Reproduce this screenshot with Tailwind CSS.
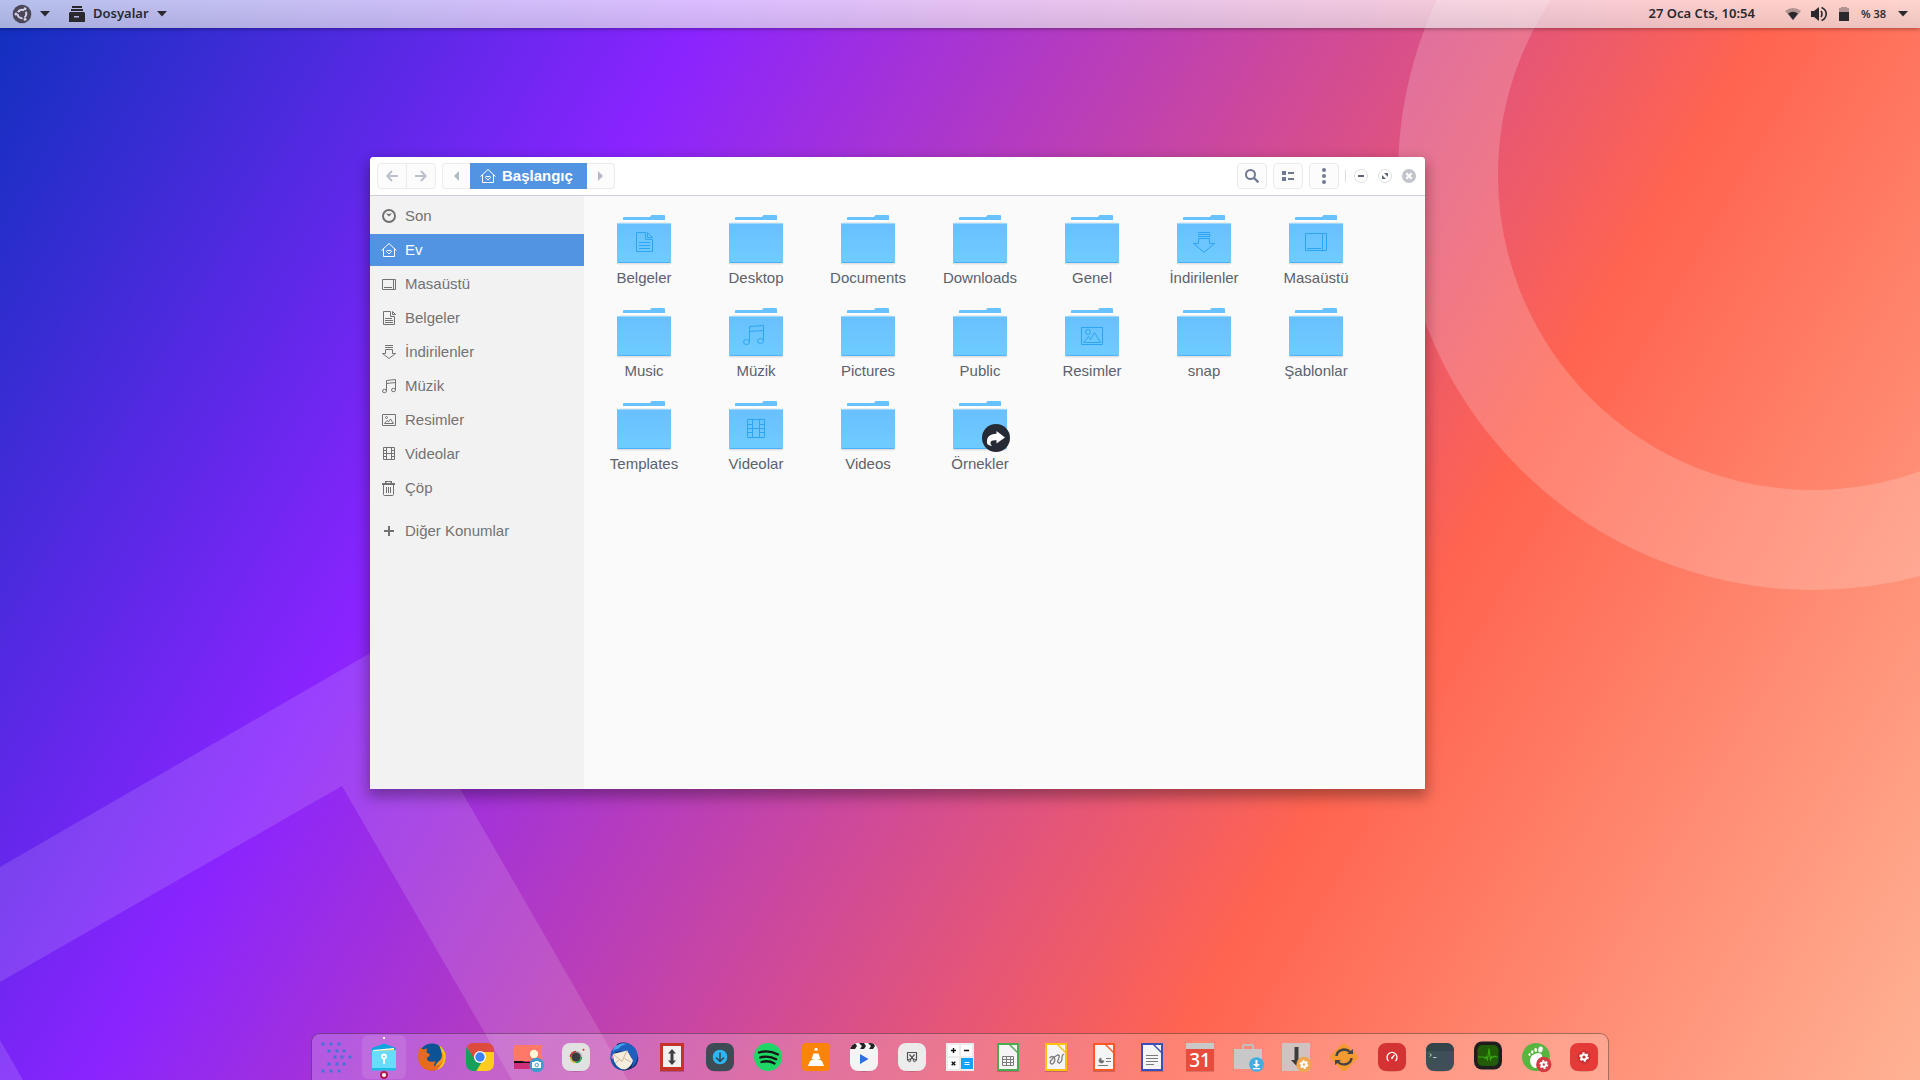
<!DOCTYPE html>
<html lang="tr">
<head>
  <meta charset="UTF-8" />
  <meta name="viewport" content="width=device-width, initial-scale=1" />
  <title>Başlangıç - Dosyalar</title>
  <script src="https://cdn.jsdelivr.net/npm/@tailwindcss/browser@4"></script>
</head>
<body class="relative h-screen overflow-hidden flex flex-col bg-[linear-gradient(120deg,#1030be_0%,#8a24ff_28%,#ff6450_70%,#ffb294_100%)] font-['Liberation_Sans',sans-serif]">

  <!-- wallpaper shapes -->
  <svg class="absolute inset-0 w-full h-full -z-0" viewBox="0 0 1920 1080" preserveAspectRatio="xMidYMid slice" aria-hidden="true">
    <circle cx="1813" cy="175" r="365" fill="none" stroke="#fff" stroke-opacity=".19" stroke-width="100" />
    <path d="M0 867L379 648L628 1080H512L342 786L0 982zM0 1040L23 1080H0z" fill="#fff" fill-opacity=".13" />
  </svg>

  <!-- top panel -->
  <header class="relative h-7 shrink-0 flex items-center justify-between px-3 bg-linear-to-b from-white/70 to-[#e6e6e9]/70 shadow-[0_1px_4px_rgba(0,0,0,0.35)] text-[#2a2a2e] text-[13px] font-semibold font-['Noto_Sans',sans-serif]">
    <div class="flex items-center">
      <button type="button" class="flex items-center gap-2" aria-label="Uygulamalar">
        <svg class="size-5" viewBox="0 0 20 20">
          <circle cx="10" cy="10" r="9.300" fill="#4b4658" />
          <circle cx="10" cy="10" r="4.300" fill="none" stroke="#d4d0e8" stroke-width="2" stroke-dasharray="7 2" stroke-dashoffset="3" />
          <circle cx="4" cy="10" r="1.500" fill="#d4d0e8" /><circle cx="13" cy="4.800" r="1.500" fill="#d4d0e8" /><circle cx="13" cy="15.200" r="1.500" fill="#d4d0e8" />
        </svg>
        <svg class="w-[10px] h-[6px]" viewBox="0 0 10 6"><path d="M0 0h10L5 5.500z" fill="#2a2a2e" /></svg>
      </button>
      <button type="button" class="ml-[19px] flex items-center gap-2">
        <svg class="size-4" viewBox="0 0 16 16" fill="#2a2a2e"><path d="M3 0h10v2H3zM2 3h12v2H2zM1 6h14l1 1v9H0V7zM5 10v1.500h5V10z" fill-rule="evenodd" /></svg>
        <span>Dosyalar</span>
        <svg class="w-[10px] h-[6px]" viewBox="0 0 10 6"><path d="M0 0h10L5 5.500z" fill="#2a2a2e" /></svg>
      </button>
    </div>
    <div class="flex items-center">
      <button type="button">27 Oca Cts, 10:54</button>
      <button type="button" class="ml-[30px] flex items-center" aria-label="Sistem menüsü">
        <svg class="w-4 h-4" viewBox="0 0 16 16"><path d="M0 5Q8-1 16 5L8 14z" fill="#2a2a2e" fill-opacity=".35" /><path d="M3 7.500Q8 4 13 7.500L8 14z" fill="#2a2a2e" /></svg>
        <svg class="ml-2.5 w-4 h-4" viewBox="0 0 16 16"><path d="M0 5h3l5-4v14l-5-4H0z" fill="#2a2a2e" /><path d="M10 5q2 3 0 6M10.500 1.500Q17 4.500 14.500 11Q13.500 13.500 10.500 14.500" fill="none" stroke="#2a2a2e" stroke-width="1.600" /></svg>
        <svg class="ml-3 w-[10px] h-[14px]" viewBox="0 0 10 14"><path d="M2 0h6v1h2v4H0V1h2z" fill="#2a2a2e" fill-opacity=".35" /><path d="M0 5h10v9H0z" fill="#2a2a2e" /></svg>
        <span class="ml-3 text-[11px]">% 38</span>
        <svg class="ml-3 w-[10px] h-[6px]" viewBox="0 0 10 6"><path d="M0 0h10L5 5.500z" fill="#2a2a2e" /></svg>
      </button>
    </div>
  </header>

  <!-- file manager -->
  <main class="relative flex-1 min-h-0 flex pl-[370px] pr-[495px] pt-[129px] pb-[291px]">
    <section class="flex-1 flex flex-col rounded-t-[4px] overflow-hidden bg-[#fafafa] shadow-[0_6px_14px_2px_rgba(0,0,0,0.32)]">
      <div class="h-[39px] shrink-0 flex items-center justify-between pl-[7px] pr-[9px] bg-white border-b border-[#cfd1da]">
        <div class="flex items-center gap-1.5">
          <div class="flex h-[26px] rounded-[4px] border border-[#ebebed] bg-[#fcfcfc] text-[#bcc0cc]">
            <button type="button" aria-label="Geri" class="w-[29px] flex items-center justify-center border-r border-[#ebebed]">
              <svg class="w-3 h-3" viewBox="0 0 12 12" fill="none" stroke="currentColor" stroke-width="2"><path d="M12 6H1.500M6 1L1.300 6L6 11" /></svg>
            </button>
            <button type="button" aria-label="İleri" class="w-[28px] flex items-center justify-center">
              <svg class="w-3 h-3" viewBox="0 0 12 12" fill="none" stroke="currentColor" stroke-width="2"><path d="M0 6H10.500M6 1L10.700 6L6 11" /></svg>
            </button>
          </div>
          <div class="flex h-[26px] rounded-[4px] bg-[#fcfcfc] text-[#b4b9c6]">
            <button type="button" aria-label="Önceki" class="w-7 flex items-center justify-center rounded-l-[4px] border border-r-0 border-[#ebebed]">
              <svg class="w-[5px] h-[10px]" viewBox="0 0 5 10"><path d="M5 0v10L0 5z" fill="currentColor" /></svg>
            </button>
            <button type="button" class="w-[117px] flex items-center gap-1.5 pl-2.5 bg-[#5294e2] text-white text-[15px] font-bold">
              <svg class="size-4" viewBox="0 0 16 16" fill="none" stroke="currentColor"><path d="M.500 8.500L8 1.500l7.500 7M2.500 7v7.500h11V7" /><path d="M8 12L5.500 9.500q0-2 2.500-.8q2.500-1.200 2.500.8z" /></svg>
              Başlangıç
            </button>
            <button type="button" aria-label="Sonraki" class="w-7 flex items-center justify-center rounded-r-[4px] border border-l-0 border-[#ebebed]">
              <svg class="w-[5px] h-[10px]" viewBox="0 0 5 10"><path d="M0 0v10l5-5z" fill="currentColor" /></svg>
            </button>
          </div>
        </div>
        <div class="flex items-center text-[#6f7a92]">
          <div class="flex gap-1.5">
            <button type="button" aria-label="Ara" class="w-[30px] h-[26px] flex items-center justify-center rounded-[4px] border border-[#ebebed] bg-[#fcfcfc]">
              <svg class="size-[14px]" viewBox="0 0 14 14" fill="none" stroke="currentColor" stroke-width="2"><circle cx="5.500" cy="5.500" r="4.500" /><path d="M8.800 8.800L13.300 13.300" stroke-width="2.300" /></svg>
            </button>
            <button type="button" aria-label="Liste görünümü" class="w-[30px] h-[26px] flex items-center justify-center rounded-[4px] border border-[#ebebed] bg-[#fcfcfc]">
              <svg class="w-3 h-[10px]" viewBox="0 0 12 10" fill="currentColor"><path d="M0 0h4v4H0zM0 6h4v4H0zM6 1h6v2H6zM6 7h6v2H6z" /></svg>
            </button>
            <button type="button" aria-label="Menü" class="w-[30px] h-[26px] flex items-center justify-center rounded-[4px] border border-[#ebebed] bg-[#fcfcfc]">
              <svg class="w-1 h-4" viewBox="0 0 4 16" fill="currentColor"><circle cx="2" cy="2" r="2" /><circle cx="2" cy="8" r="2" /><circle cx="2" cy="14" r="2" /></svg>
            </button>
          </div>
          <div class="ml-1.5 mr-2 w-px h-3 bg-[#dddee2]"></div>
          <div class="flex gap-2.5">
            <button type="button" aria-label="Küçült" class="size-[14px] flex"><svg class="size-[14px]" viewBox="0 0 14 14"><circle cx="7" cy="7" r="6.500" fill="#fff" stroke="#dcdde0" /><path d="M4 6h6v2H4z" fill="#5c6478" /></svg></button>
            <button type="button" aria-label="Büyüt" class="size-[14px] flex"><svg class="size-[14px]" viewBox="0 0 14 14"><circle cx="7" cy="7" r="6.500" fill="#fff" stroke="#dcdde0" /><path d="M6 4h4v4zM4 6v4h4z" fill="#5c6478" /></svg></button>
            <button type="button" aria-label="Kapat" class="size-[14px] flex"><svg class="size-[14px]" viewBox="0 0 14 14"><circle cx="7" cy="7" r="7" fill="#c2c4cb" /><path d="M4.300 4.300l5.400 5.400M9.700 4.300l-5.400 5.400" stroke="#fff" stroke-width="2.200" /></svg></button>
          </div>
        </div>
      </div>

      <div class="flex-1 min-h-0 flex">
        <nav id="places" class="w-[214px] shrink-0 flex flex-col gap-0.5 pt-1 bg-[#f2f2f2] text-[15px] text-[#727272]"></nav>
        <div id="files" class="flex-1 grid grid-cols-[repeat(auto-fill,112px)] content-start gap-y-[19px] pt-[18px] pl-1 text-[15px] leading-5 text-[#5c616c]"></div>
      </div>
    </section>
  </main>

  <!-- dock -->
  <footer class="absolute bottom-0 inset-x-0 flex justify-center">
    <nav id="dock" class="flex h-[47px] rounded-t-[9px] border border-b-0 border-black/35 bg-white/20"></nav>
  </footer>

  <script>
    const placeIcons = {
      recent: '<circle cx="8" cy="8" r="6" stroke-width="2"/><path d="M5 5.500h1L8 6l2-.5h1L8 8.500z" fill="currentColor" stroke="none"/>',
      home: '<path d="M.500 8.500L8 1.500l7.500 7M2.500 7v7.500h11V7"/><path d="M8 12L5.500 9.500q0-2 2.500-.8q2.500-1.200 2.500.8z"/>',
      desktop: '<path d="M1.500 3.500h13v10h-13zM12.500 3.500v10M3 11.500h8"/>',
      docs: '<path d="M9.500 1.500h-7v13h11v-8h-4zM11.500 1.500v3h3zM4 8.500h7M4 10.500h8M4 12.500h8"/>',
      down: '<path d="M4 1.500h8M4 3.500h8M4.500 9.500V5.500h7v4h3L8 14.500L1.500 9.500z"/>',
      music: '<path d="M5.500 12.500v-10l9-1v10M5.500 5.500l9-1"/><ellipse cx="3.500" cy="13" rx="2" ry="1.700"/><ellipse cx="12.500" cy="12" rx="2" ry="1.700"/>',
      pics: '<path d="M1.500 2.500h13v11h-13zM3.500 11.500h9L9.500 7L7.500 9.800L6 8.500z"/><circle cx="5.500" cy="5.500" r="1"/>',
      video: '<path d="M2.500 1.500h11v12h-11zM5.500 1.500v12M10.500 1.500v12M2.500 4.500h3M2.500 7.500h11M2.500 10.500h3M10.500 4.500h3M10.500 10.500h3"/>',
      trash: '<path d="M2.500 5v9.500q0 1 1 1h8q1 0 1-1V5M5.500 7v6M7.500 7v6M9.500 7v6"/><path d="M1 5V3h3V1h7v2h3v2zM5.500 2v1h4V2z" fill="currentColor" stroke="none" fill-rule="evenodd"/>',
      plus: '<path d="M8 3v10M3 8h10" stroke-width="2"/>'
    };

    const places = [
      ['recent', 'Son'], ['home', 'Ev'], ['desktop', 'Masaüstü'], ['docs', 'Belgeler'], ['down', 'İndirilenler'],
      ['music', 'Müzik'], ['pics', 'Resimler'], ['video', 'Videolar'], ['trash', 'Çöp'], ['plus', 'Diğer Konumlar']
    ];

    document.getElementById('places').innerHTML = places.map(([icon, name]) => {
      const extra = name === 'Ev' ? 'bg-[#5294e2] text-white' : name === 'Diğer Konumlar' ? 'mt-[9px]' : '';
      return `<a href="#" class="h-8 flex items-center gap-2 pl-[11px] ${extra}">
        <svg class="size-4" viewBox="0 0 16 16" fill="none" stroke="currentColor">${placeIcons[icon]}</svg>${name}</a>`;
    }).join('');

    const emblems = {
      docs: '<path d="M29.500 18.500h-9v19h16v-12h-7zM31.500 18.500v5h5zM23 28.500h11M23 31.500h11M23 34.500h11"/>',
      down: '<path d="M22 18.500h12M22 20.500h12v2H22M22.500 29.500v-5h11v5h5L28 38.300L17.500 29.500z"/>',
      desktop: '<path d="M17.500 19.500h21v17h-21zM34.500 19.500v17M19 34.500h14"/>',
      music: '<path d="M21.500 34.500v-15l14-1v15M21.500 24.500l14-1"/><ellipse cx="18.500" cy="35" rx="3" ry="2.500"/><ellipse cx="32.500" cy="34" rx="3" ry="2.500"/>',
      pics: '<path d="M17.500 20.500h21v17h-21zM19.500 35.500h17L30.500 25.500L26.500 32.500L24.500 29.500z"/><circle cx="24" cy="25" r="2.500"/>',
      video: '<path d="M19.500 19.500h17v18h-17zM24.500 19.500v18M31.500 19.500v18M19.500 24.500h5M19.500 28.500h17M19.500 32.500h5M31.500 24.500h5M31.500 32.500h5"/>'
    };

    const linkBadge = '<circle cx="44" cy="38" r="14" fill="#252a35"/><path d="M35 43q-1-9 9.500-9.300V31l8.500 6.500l-8.500 6v-3.200q-5.500-.5-6 2.200q-.5 1.500 1.500 3.500q-5-1-5-3z" fill="#fff"/>';

    const files = [
      ['Belgeler', 'docs'], ['Desktop'], ['Documents'], ['Downloads'], ['Genel'], ['İndirilenler', 'down'], ['Masaüstü', 'desktop'],
      ['Music'], ['Müzik', 'music'], ['Pictures'], ['Public'], ['Resimler', 'pics'], ['snap'], ['Şablonlar'],
      ['Templates'], ['Videolar', 'video'], ['Videos'], ['Örnekler', 'link']
    ];

    document.getElementById('files').innerHTML = files.map(([name, emblem]) => `
      <a href="#" class="flex flex-col items-center gap-0.5">
        <svg class="w-14 h-[52px] overflow-visible" viewBox="0 0 56 52">
          <rect x="1" y="47" width="54" height="3.500" rx="1.500" fill="#000" fill-opacity=".1"/>
          <path d="M7 7V4q0-1 1-1h26q1-2 2-2h12q1 0 1 1v5z" fill="#68c2ff"/>
          <path d="M4 10V7q0-1 1-1h46q1 0 1 1v3z" fill="#fff"/>
          <path d="M4 8.500h48" stroke="#ececec"/>
          <path d="M1 10q0-1 1-1h52q1 0 1 1v38q0 1-1 1H2q-1 0-1-1z" fill="url(#front)"/>
          <path d="M2 9.500h52" stroke="#9fd8ff"/><path d="M2 48.500h52" stroke="#4cb1f6"/>
          ${emblems[emblem] ? `<g fill="none" stroke="#2ea4f4">${emblems[emblem]}</g>` : ''}
          ${emblem === 'link' ? linkBadge : ''}
        </svg>
        <span>${name}</span>
      </a>`).join('');

    const tile = (fill) => `<path d="M24 9c11 0 14 3 14 14s-3 14-14 14s-14-3-14-14s3-14 14-14z" fill="#000" fill-opacity=".15" transform="translate(0 1)"/><rect x="10" y="9" width="28" height="28" rx="8" fill="${fill}"/>`;
    const page = (color, inner) => `<path d="M13 10h22v28H13z" fill="#000" fill-opacity=".2"/><path d="M13 9h22v28H13z" fill="${color}"/><path d="M15 11h10l8 8v16H15z" fill="#f5f5f5"/><path d="M27 11h6v6z" fill="#f5f5f5"/><g fill="none" stroke="#7a7a7a">${inner}</g>`;
    const gear = (x, y, r) => `<g transform="translate(${x} ${y})"><circle r="${r}" fill="none" stroke="#fff" stroke-width="2"/><circle r="${r + 1.400}" fill="none" stroke="#fff" stroke-width="1.600" stroke-dasharray="${(r + 1.400) * 0.5236} ${(r + 1.400) * 0.5236}"/></g>`;
    const dots = [[10, 11, 19, 27], [17, 17, 25, 32], [23, 23, 30, 38], [30, 17, 25, 32], [37, 11, 19, 27]]
      .map(([y, ...xs]) => xs.map((x) => `<rect x="${x - 1.500}" y="${y - 1.500}" width="3" height="3" fill="#4274d8"/>`).join('')).join('');

    const dock = [
      ['Uygulamaları Göster', dots],
      ['Dosyalar', `<rect x="2" y="1" width="44" height="44" rx="6" fill="#fff" fill-opacity=".1"/><rect x="23" y="3" width="2" height="2" fill="#fff"/>
        <path d="M12 14L24 9.500L36 14v5H12z" fill="#10a4e0"/><path d="M13 16l21-2v4H13z" fill="#fff"/><path d="M14 17l20-2v3H14z" fill="#ffd84c"/>
        <path d="M12 17l24-1v20H12z" fill="#68dcfd"/><path d="M12 34h24v2.500H12z" fill="#1cbde6"/><circle cx="24" cy="22.500" r="2" fill="none" stroke="#fff" stroke-width="1.800"/><path d="M24 24.500v5.500" stroke="#fff" stroke-width="1.800"/>
        <circle cx="24" cy="41" r="4" fill="#b01c4e"/><circle cx="24" cy="41" r="2" fill="#fff"/>`],
      ['Firefox', `<circle cx="24" cy="23" r="13.500" fill="#0b5394"/><path d="M31 11q7 4.500 6.800 12.500Q37 35 26 36.500q9-5 8-14q0-5-3-11.500z" fill="#fcc419"/><path d="M34 17q4 9-2 15l-4 4q-2-5 2-8q5-3 4-11z" fill="#f7931e"/>
        <path d="M12 13q1 2 4 2.500q2-1 3-1l-.5 4l3 1.500q1 2-2.500 3.500q-.5 3 2.500 4q4 .5 6-.5q-2 4-2 9.300Q12 37 10.200 25Q10 17 12 13z" fill="#e66a1f"/><path d="M11 22q4 11 16 10q5-1 7-4q-3 9-10.500 8.800Q13 36 11 22z" fill="#e66a1f"/>`],
      ['Chrome', `<clipPath id="cr"><rect x="10" y="9" width="28" height="28" rx="7"/></clipPath><g clip-path="url(#cr)"><path d="M8 7h32v12H24L18 26z" fill="#dd4b3c"/><path d="M8 9l11 17l7 2l-5 11H8z" fill="#16a05d"/><path d="M24 18h16v21H19l8-13z" fill="#fccd1c"/></g><circle cx="24" cy="23" r="6" fill="#fff"/><circle cx="24" cy="23" r="4.700" fill="#3b82f6"/>`],
      ['Ekran Kaydı', `<path d="M10 11h28v16H10z" fill="#ff7868"/><circle cx="30" cy="20" r="4.200" fill="#fff4d6"/><path d="M10 27h28v8H10z" fill="#cf2e78"/><path d="M10 27h8l3 1h17v1H10z" fill="#111"/><circle cx="32.700" cy="31" r="7.300" fill="#419bcd"/><path d="M28 28h2.500l1-1h2.500l1 1h2v6h-9z" fill="#fff"/><circle cx="32.700" cy="31" r="1.700" fill="none" stroke="#419bcd"/>`],
      ['Kamera', tile('#e2e1e1') + `<circle cx="24" cy="23" r="6" fill="#a3a3a3"/><path d="M18.500 23A5.500 5.500 0 0 1 24 17.500" stroke="#c33" stroke-width="1.500" fill="none"/><path d="M29.500 23A5.500 5.500 0 0 1 24 28.500" stroke="#2a5" stroke-width="1.500" fill="none"/><path d="M18.500 23A5.500 5.500 0 0 0 24 28.500" stroke="#cb3" stroke-width="1.500" fill="none"/><circle cx="24" cy="23" r="4.500" fill="#3b3b3f"/><circle cx="31.500" cy="15.700" r="1" fill="#e0302a"/>`],
      ['Thunderbird', `<path d="M17 10q9-4 16 3q6 7 5 14q-2 8-13 9.500q-9 0-13-7z" fill="#14295f"/><path d="M10.500 24q-1-8 6-12q5-5 12-2.500q8 3 9 11q1 8-6 13q3-8-2-13q-5-4-11-3q-5 1-8 6.500z" fill="#1f5fc0"/><path d="M15 13q5-5 12-3q-6 1-9 5q-4 0-5 3q0-3 2-5z" fill="#49a6ea"/>
        <path d="M13 20l14-3.500l6 10q-2 7-8 9q-8 0-11-6z" fill="#f4ecdc"/><path d="M13 20l9 7.500l5-11M14.500 30l5-4.500M31 28l-6.500-3.500" stroke="#c4b190" stroke-width=".9" fill="none"/><path d="M10.200 22q0 8 6 12q4 3 9 2.500q-8-2-11-9z" fill="#1b51a8"/>`],
      ['Düzenleyici', `<path d="M12 10h24v28H12z" fill="#000" fill-opacity=".2"/><path d="M12 9h24v28H12z" fill="#c63329"/><path d="M15 12h18v21H15z" fill="#f1f1f1"/><path d="M24 15l4 4.500h-2.500v7H28L24 31l-4-4.500h2.500v-7H20z" fill="#3f3f3f"/>`],
      ['uGet', tile('#3d4c54') + `<circle cx="24" cy="23" r="7.300" fill="#2cb6f3"/><path d="M24 18.500v8.500M20 23.500l4 4l4-4" fill="none" stroke="#33454f" stroke-width="1.500"/>`],
      ['Spotify', `<circle cx="24" cy="23" r="14" fill="#1fd565"/><path d="M15 18.500q9.500-3 19 2M16.200 23.500q8.500-2.500 16 1.800M17.500 28q7-2 13 1.500" fill="none" stroke="#151515" stroke-width="2.300" stroke-linecap="round"/>`],
      ['VLC', `<rect x="10" y="9" width="28" height="28" rx="4" fill="#f98408"/><path d="M18 27h12l2 5H16z" fill="#fff"/><path d="M21.500 19.500h5l2 5.500q-4.500 2-9 0zM23 14h2.200l.8 2.500h-4z" fill="#fff"/><path d="M19 26l-.5 2q5.500 2.500 11 0L29 26z" fill="#fff"/>`],
      ['Videolar', tile('#f4f4f5') + `<clipPath id="cl"><rect x="10" y="9" width="28" height="28" rx="8"/></clipPath><path clip-path="url(#cl)" d="M10 9h5l2 3l-2 3h-5zM19 9h5l2 3l-2 3h-4l2-3zM28 9h5l2 3l-2 3h-4l2-3z" fill="#222"/><path d="M20 20l8.500 5l-8.500 5z" fill="#2f6fe0"/>`],
      ['Ekran Görüntüsü', tile('#ececec') + `<path d="M21.500 26H19.500v-7.500h9V26h-2" fill="none" stroke="#555" stroke-width="1.200"/><path d="M21.500 20.500l4.500 5.500M26.500 20.500L22 26" stroke="#555" stroke-width="1.200"/><circle cx="21.500" cy="26.500" r="1.200" fill="none" stroke="#555"/><circle cx="26.500" cy="26.500" r="1.200" fill="none" stroke="#555"/>`],
      ['Hesap Makinesi', `<path d="M10 9h28v28H10z" fill="#ececec"/><path d="M12 11h11v11H12zM25 11h11v11H25zM12 24h11v11H12z" fill="#fff"/><path d="M25 24h12v11H25z" fill="#12a4fa"/><path d="M15 16.500h5M17.500 14v5M28 16.500h5M15.700 27.700l3.600 3.600M19.300 27.700l-3.600 3.600" stroke="#111" stroke-width="1.400"/><path d="M28.500 28.500h5M28.500 30.500h5" stroke="#fff"/>`],
      ['Calc', page('#4bab50', '<path d="M18.500 22.500h11v9h-11zM22.500 22.500v9M26.500 22.500v9M18.500 25.500h11M18.500 28.500h11"/>')],
      ['Draw', page('#fdc010', '<path d="M17.500 24q3-3 5 0q1 4-2 6q-3 0-2-3q3-4 7-6q3 0 1 4q-2 4 1 4q3-2 2.500-6q0-2 2-3" stroke-width="1.300"/>')],
      ['Impress', page('#fb5626', '<path d="M26 24.500h5M26 27.500h5M18 31.500h10"/><path d="M21 24a2.500 2.500 0 1 0 3 3l-3-.3z" fill="#666"/>')],
      ['Writer', page('#3b4fb6', '<path d="M18 21.500h12M18 24.500h12M18 27.500h12M18 30.500h8"/>')],
      ['Takvim', `<path d="M10 15h28v23H10z" fill="#000" fill-opacity=".15"/><path d="M10 15h28v22H10z" fill="#e84c3d"/><path d="M10 9h28v6H10z" fill="#c9c9c9"/><text x="24" y="33" text-anchor="middle" font-family="Noto Sans" font-size="19" font-weight="500" fill="#fff">31</text>`],
      ['Yazılım', `<path d="M19 15v-3q0-1 1-1h8q1 0 1 1v3" fill="none" stroke="#bfbfbf" stroke-width="2"/><path d="M10 15h28v20H10z" fill="#c8c8c8"/><circle cx="32.500" cy="30.500" r="7.300" fill="#43ade3"/><path d="M31.500 26h2v4h2.500l-3.500 3.500L29 30h2.500zM29 34h7v1.200h-7z" fill="#fff"/>`],
      ['Paketler', `<path d="M10 9h28v28H10z" fill="#cfc2c0"/><path d="M22.500 13h4v13h2L24.500 32L19 26h3.500z" fill="#3c3c3c"/><circle cx="32" cy="30.500" r="7.700" fill="#f0a650"/>` + gear(32, 30.500, 2.200)],
      ['Güncelleyici', `<path d="M24 10q3 0 6 4l7 7q2 2 0 4l-6 6q-4 6-7 6t-7-6l-6-6q-2-2 0-4l7-7q3-4 6-4z" fill="#f49a32"/><path d="M16.500 22q.5-5.500 7-6.500q5 0 7 3.500M31.500 24q-.5 5.500-7 6.500q-5 0-7-3.500" fill="none" stroke="#444" stroke-width="2.500"/><path d="M27 20h6v-5zM21 26h-6v5z" fill="#444"/>`],
      ['Stacer', tile('#d43333') + `<path d="M20.500 27a5 5 0 1 1 7 0M24 24l2.500-3" fill="none" stroke="#fff" stroke-width="1.300"/><circle cx="24" cy="24" r="1" fill="#fff"/>`],
      ['Uçbirim', tile('#3f4f58') + `<path d="M10 17q0-8 8-8h12q8 0 8 8z" fill="#35434b"/><path d="M13.500 19.500l2 1.500l-2 1.500M17 23.500h3.500" fill="none" stroke="#b8c4ca"/>`],
      ['Sistem İzleyici', `<rect x="10" y="7.500" width="28" height="28" rx="8" fill="#1e1e1e"/><rect x="13.500" y="11" width="21" height="21" rx="5" fill="#225c08"/><path d="M14 23h6l1 1.500l1.500-2l1 4l1.500-12l1.500 12l1-4l1.500 1l1.500-1.500l1.500 1h2" fill="none" stroke="#39a812" stroke-width="1.100"/>`],
      ['İnce Ayar', `<circle cx="24" cy="23" r="14" fill="#57b540"/><path d="M18 27q0-7 8-8q5 .5 4 4q-1 2-4 3q-2 2 0 5q0 3-3 3q-4-1-5-7z" fill="#fff"/><ellipse cx="28.500" cy="15.500" rx="2.200" ry="3" fill="#fff" transform="rotate(15 28.500 15.500)"/><ellipse cx="23.700" cy="16" rx="1.400" ry="2" fill="#fff"/><ellipse cx="20.300" cy="18" rx="1.200" ry="1.700" fill="#fff"/><ellipse cx="17.500" cy="20.500" rx="1" ry="1.500" fill="#fff"/><circle cx="31.800" cy="30.500" r="7.700" fill="#d23c42"/>` + gear(31.800, 30.500, 2.200)],
      ['Ayarlar', tile('#e43a38') + '<circle cx="24" cy="23" r="6.500" fill="#c93131"/>' + gear(24, 23, 2.600)]
    ];

    document.getElementById('dock').innerHTML = dock.map(([name, art]) => `
      <button type="button" aria-label="${name}" class="w-12 h-[46px]"><svg class="w-12 h-[46px]" viewBox="0 0 48 46">${art}</svg></button>`).join('');
  </script>

  <svg class="absolute size-0" aria-hidden="true">
    <linearGradient id="front" x1="0" y1="0" x2="0" y2="1"><stop stop-color="#68c0ff" /><stop offset="1" stop-color="#6fccff" /></linearGradient>
  </svg>
</body>
</html>
